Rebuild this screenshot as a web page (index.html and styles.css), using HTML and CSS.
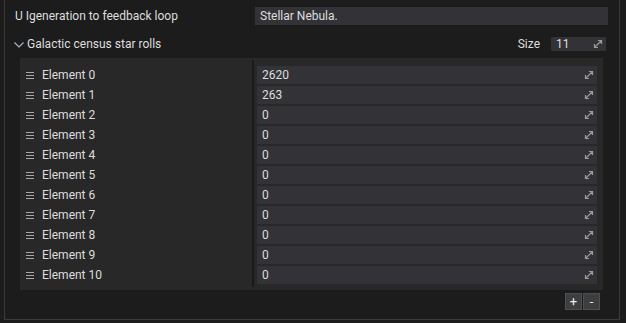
FILE: index.html
```html
<!DOCTYPE html>
<html>
<head>
<meta charset="utf-8">
<link rel="stylesheet" href="styles.css">
</head>
<body>
<div class="frame">
  <div class="prop-row">
    <div class="prop-label">U Igeneration to feedback loop</div>
    <div class="col-divider"></div>
    <div class="text-field">Stellar Nebula.</div>
  </div>
  <div class="list-header">
    <svg class="chevron" width="10" height="6" viewBox="0 0 10 6"><path d="M0.5 0.5 L5 5 L9.5 0.5" fill="none" stroke="#b8b8b8" stroke-width="1.1"/></svg>
    <span class="list-title">Galactic census star rolls</span>
    <span class="size-label">Size</span>
    <div class="size-field"><span>11</span>
      <svg class="expand" width="10" height="10" viewBox="0 0 10 10"><path d="M1.5 8.5 L8.5 1.5 M5 1.5 H8.5 V5 M1.5 5 V8.5 H5" fill="none" stroke="#9a9a9a" stroke-width="1.2"/></svg>
    </div>
  </div>
  <div class="panel">
    <div class="names">
      <div class="name-row"><span class="grip"></span><span>Element 0</span></div>
      <div class="name-row"><span class="grip"></span><span>Element 1</span></div>
      <div class="name-row"><span class="grip"></span><span>Element 2</span></div>
      <div class="name-row"><span class="grip"></span><span>Element 3</span></div>
      <div class="name-row"><span class="grip"></span><span>Element 4</span></div>
      <div class="name-row"><span class="grip"></span><span>Element 5</span></div>
      <div class="name-row"><span class="grip"></span><span>Element 6</span></div>
      <div class="name-row"><span class="grip"></span><span>Element 7</span></div>
      <div class="name-row"><span class="grip"></span><span>Element 8</span></div>
      <div class="name-row"><span class="grip"></span><span>Element 9</span></div>
      <div class="name-row"><span class="grip"></span><span>Element 10</span></div>
    </div>
    <div class="separator"></div>
    <div class="values">
      <div class="value-field"><span>2620</span><svg class="expand" width="10" height="10" viewBox="0 0 10 10"><path d="M1.5 8.5 L8.5 1.5 M5 1.5 H8.5 V5 M1.5 5 V8.5 H5" fill="none" stroke="#9a9a9a" stroke-width="1.2"/></svg></div>
      <div class="value-field"><span>263</span><svg class="expand" width="10" height="10" viewBox="0 0 10 10"><path d="M1.5 8.5 L8.5 1.5 M5 1.5 H8.5 V5 M1.5 5 V8.5 H5" fill="none" stroke="#9a9a9a" stroke-width="1.2"/></svg></div>
      <div class="value-field"><span>0</span><svg class="expand" width="10" height="10" viewBox="0 0 10 10"><path d="M1.5 8.5 L8.5 1.5 M5 1.5 H8.5 V5 M1.5 5 V8.5 H5" fill="none" stroke="#9a9a9a" stroke-width="1.2"/></svg></div>
      <div class="value-field"><span>0</span><svg class="expand" width="10" height="10" viewBox="0 0 10 10"><path d="M1.5 8.5 L8.5 1.5 M5 1.5 H8.5 V5 M1.5 5 V8.5 H5" fill="none" stroke="#9a9a9a" stroke-width="1.2"/></svg></div>
      <div class="value-field"><span>0</span><svg class="expand" width="10" height="10" viewBox="0 0 10 10"><path d="M1.5 8.5 L8.5 1.5 M5 1.5 H8.5 V5 M1.5 5 V8.5 H5" fill="none" stroke="#9a9a9a" stroke-width="1.2"/></svg></div>
      <div class="value-field"><span>0</span><svg class="expand" width="10" height="10" viewBox="0 0 10 10"><path d="M1.5 8.5 L8.5 1.5 M5 1.5 H8.5 V5 M1.5 5 V8.5 H5" fill="none" stroke="#9a9a9a" stroke-width="1.2"/></svg></div>
      <div class="value-field"><span>0</span><svg class="expand" width="10" height="10" viewBox="0 0 10 10"><path d="M1.5 8.5 L8.5 1.5 M5 1.5 H8.5 V5 M1.5 5 V8.5 H5" fill="none" stroke="#9a9a9a" stroke-width="1.2"/></svg></div>
      <div class="value-field"><span>0</span><svg class="expand" width="10" height="10" viewBox="0 0 10 10"><path d="M1.5 8.5 L8.5 1.5 M5 1.5 H8.5 V5 M1.5 5 V8.5 H5" fill="none" stroke="#9a9a9a" stroke-width="1.2"/></svg></div>
      <div class="value-field"><span>0</span><svg class="expand" width="10" height="10" viewBox="0 0 10 10"><path d="M1.5 8.5 L8.5 1.5 M5 1.5 H8.5 V5 M1.5 5 V8.5 H5" fill="none" stroke="#9a9a9a" stroke-width="1.2"/></svg></div>
      <div class="value-field"><span>0</span><svg class="expand" width="10" height="10" viewBox="0 0 10 10"><path d="M1.5 8.5 L8.5 1.5 M5 1.5 H8.5 V5 M1.5 5 V8.5 H5" fill="none" stroke="#9a9a9a" stroke-width="1.2"/></svg></div>
      <div class="value-field"><span>0</span><svg class="expand" width="10" height="10" viewBox="0 0 10 10"><path d="M1.5 8.5 L8.5 1.5 M5 1.5 H8.5 V5 M1.5 5 V8.5 H5" fill="none" stroke="#9a9a9a" stroke-width="1.2"/></svg></div>
    </div>
  </div>
  <div class="buttons">
    <div class="btn">+</div>
    <div class="btn">-</div>
  </div>
</div>
</body>
</html>
```
FILE: styles.css
```css
* { box-sizing: border-box; }
html, body { margin: 0; padding: 0; }
body {
  background: #1c1c1c;
  font-family: Roboto, "Noto Sans", sans-serif;
  font-size: 12px;
  color: #dedede;
  width: 626px;
  height: 323px;
  overflow: hidden;
}
.frame {
  margin-left: 4px;
  width: 616px;
  height: 320px;
  border: 1px solid #3a3a3a;
  border-top: none;
}
.prop-row {
  display: flex;
  align-items: center;
  height: 32px;
}
.prop-label {
  width: 245px;
  padding-left: 10px;
}
.col-divider {
  width: 1px;
  height: 32px;
  background: #181818;
}
.text-field {
  margin-left: 4px;
  width: 353px;
  height: 18px;
  line-height: 18px;
  padding-left: 5px;
  background: #333337;
}
.list-header {
  display: flex;
  align-items: center;
  height: 24px;
  padding-left: 9px;
}
.chevron { display: block; margin-top: 2px; }
.list-title { margin-left: 3px; flex: 1; }
.size-label { margin-right: 11px; }
.size-field {
  width: 55px;
  height: 14px;
  margin-right: 13px;
  background: #333337;
  display: flex;
  align-items: center;
  justify-content: space-between;
  padding-left: 5px;
  padding-right: 3px;
}
.expand { display: block; }
.panel {
  margin-top: 2px;
  margin-left: 15px;
  width: 583px;
  height: 232px;
  background: #282828;
  display: flex;
}
.names {
  width: 232px;
  padding-top: 8px;
  display: flex;
  flex-direction: column;
  gap: 2px;
}
.name-row {
  height: 18px;
  display: flex;
  align-items: center;
  padding-left: 6px;
}
.grip {
  width: 8px;
  height: 7px;
  margin-right: 8px;
  border-top: 1px solid #a8a8a8;
  border-bottom: 1px solid #a8a8a8;
  position: relative;
}
.grip::after {
  content: "";
  position: absolute;
  left: 0;
  right: 0;
  top: 2px;
  height: 1px;
  background: #a8a8a8;
}
.separator {
  width: 2px;
  margin-top: 2px;
  margin-bottom: 3px;
  background: #1a1a1a;
}
.values {
  width: 343px;
  padding-left: 3px;
  padding-top: 8px;
  display: flex;
  flex-direction: column;
  gap: 2px;
}
.value-field {
  height: 18px;
  background: #333337;
  display: flex;
  align-items: center;
  justify-content: space-between;
  padding-left: 5px;
  padding-right: 3px;
}
.buttons {
  display: flex;
  justify-content: flex-end;
  gap: 1px;
  margin-top: 3px;
  padding-right: 19px;
}
.btn {
  width: 17px;
  height: 17px;
  background: #3d3e40;
  border: 1px solid #4e4f51;
  color: #ededed;
  font-size: 13px;
  line-height: 15px;
  text-align: center;
}
```
